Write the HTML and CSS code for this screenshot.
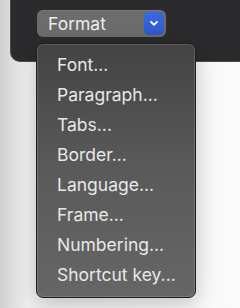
FILE: index.html
```html
<!DOCTYPE html>
<html lang="en">
<head>
  <meta charset="UTF-8" />
  <title>Format menu</title>
  <link rel="stylesheet" href="styles.css">
</head>
<body>
  <div class="panel">
    <div class="popup">
      <span class="popup-label">Format</span>
      <span class="popup-arrow">
        <svg width="10" height="7" viewBox="0 0 10 7">
          <path d="M2 1.8 L5 4.8 L8 1.8" fill="none" stroke="#fff" stroke-width="1.8" stroke-linecap="round" stroke-linejoin="round"/>
        </svg>
      </span>
    </div>
  </div>

  <ul class="menu">
    <li class="menu-item">Font...</li>
    <li class="menu-item">Paragraph...</li>
    <li class="menu-item">Tabs...</li>
    <li class="menu-item">Border...</li>
    <li class="menu-item">Language...</li>
    <li class="menu-item">Frame...</li>
    <li class="menu-item">Numbering...</li>
    <li class="menu-item">Shortcut key...</li>
  </ul>
</body>
</html>
```

FILE: styles.css
```css
body {
  margin: 0;
  width: 240px;
  height: 308px;
  overflow: hidden;
  font-family: Inter, 'Noto Sans', sans-serif;
  background: linear-gradient(to right, #cfcfcf 0px, #f1f1f1 28px, #fafafa 100%);
}

.panel {
  margin-left: 10px;
  height: 62px;
  box-sizing: border-box;
  padding: 10px 0 0 26px;
  background-color: #2b2b2d;
  border-left: 1px solid #4c4c4e;
  border-bottom: 1px solid #4c4c4e;
  border-bottom-left-radius: 10px;
}

.popup {
  width: 129px;
  height: 27px;
  box-sizing: border-box;
  display: flex;
  align-items: center;
  justify-content: space-between;
  padding: 0 2px 0 11px;
  background-color: #6c6c6c;
  border-radius: 6px;
  box-shadow: inset 0 1px 0 rgba(255, 255, 255, 0.08);
}

.popup-label {
  color: #ececec;
  font-size: 17.5px;
}

.popup-arrow {
  width: 20px;
  height: 23px;
  display: flex;
  align-items: center;
  justify-content: center;
  background: linear-gradient(#3a68e0, #2e58cf);
  border-radius: 5px;
}

.menu {
  position: absolute;
  left: 36px;
  top: 43px;
  width: 160px;
  height: 255px;
  box-sizing: border-box;
  margin: 0;
  padding: 6px 0 0 0;
  list-style: none;
  background: linear-gradient(#434343, #5a5a5a 50%, #666666);
  border: 1px solid #1e1e1e;
  border-radius: 7px;
  box-shadow: inset 0 0 0 1px rgba(255, 255, 255, 0.14), 0 6px 22px rgba(0, 0, 0, 0.22);
}

.menu-item {
  height: 30px;
  line-height: 30px;
  padding-left: 20px;
  color: #e8e8e8;
  font-size: 17.5px;
}
```
